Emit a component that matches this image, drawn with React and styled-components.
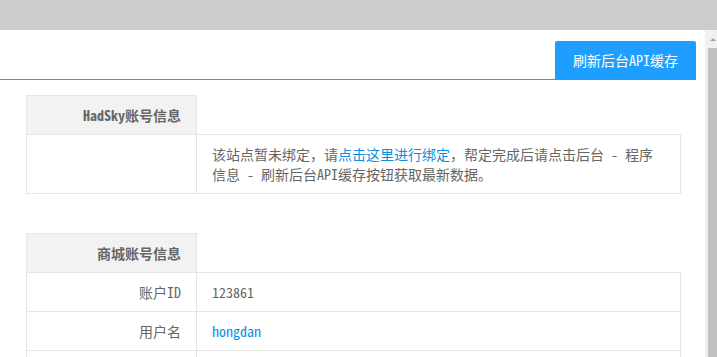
import React from "react";
import styled, { createGlobalStyle } from "styled-components";

const GlobalStyle = createGlobalStyle`
  html, body {
    margin: 0;
    padding: 0;
    overflow: hidden;
  }
  body {
    font-family: "Noto Sans Mono CJK SC", "Noto Sans CJK SC", "Liberation Sans", sans-serif;
    font-size: 14px;
    color: #666;
    background: #fff;
  }
`;

const Page = styled.div`
  height: 357px;
  display: flex;
  flex-direction: column;
`;

const TopBar = styled.div`
  height: 30px;
  flex-shrink: 0;
  background-color: #cccccc;
`;

const Frame = styled.div`
  flex: 1;
  display: flex;
  min-height: 0;
  overflow: hidden;
`;

const Main = styled.div`
  flex: 1;
  background-color: #fff;
`;

const Header = styled.div`
  height: 50px;
  box-sizing: border-box;
  margin-right: 9px;
  display: flex;
  justify-content: flex-end;
  align-items: flex-end;
  border-bottom: 1px solid #1e9fff;
`;

const Button = styled.button`
  height: 38px;
  line-height: 38px;
  padding: 0 18px;
  border: none;
  border-radius: 2px 2px 0 0;
  background-color: #1e9fff;
  color: #fff;
  font-family: inherit;
  font-size: 14px;
  cursor: pointer;
  white-space: nowrap;
`;

const Content = styled.div`
  padding: 15px 24px 0 26px;
`;

const Table = styled.table`
  width: 655px;
  border-collapse: collapse;
  table-layout: fixed;
  margin-bottom: ${(props) => props.gap || 0}px;
`;

const HeadCell = styled.th`
  padding: 9px 15px;
  line-height: 20px;
  text-align: right;
  font-weight: bold;
  color: #666;
  background-color: #f2f2f2;
  border: 1px solid #e6e6e6;
`;

const EmptyHead = styled.th`
  border: none;
  padding: 0;
`;

const Label = styled.td`
  padding: 9px 15px;
  height: 20px;
  line-height: 20px;
  text-align: right;
  border: 1px solid #e6e6e6;
`;

const Value = styled.td`
  padding: 9px 15px;
  line-height: 20px;
  text-align: left;
  border: 1px solid #e6e6e6;
  color: ${(props) => (props.link ? "#0c8ee0" : "#666")};
`;

const Link = styled.a`
  color: #0c8ee0;
  text-decoration: none;
`;

const Scrollbar = styled.div`
  width: 12px;
  flex-shrink: 0;
  display: flex;
  flex-direction: column;
  background-color: #f1f1f1;
  padding-left: 3px;
  box-sizing: border-box;
`;

const ScrollArrow = styled.div`
  height: 18px;
  flex-shrink: 0;
  display: flex;
  justify-content: center;
  align-items: center;
  &::before {
    content: "";
    width: 0;
    height: 0;
    border-left: 3px solid transparent;
    border-right: 3px solid transparent;
    border-bottom: 3px solid #a3a3a3;
  }
`;

const ScrollThumb = styled.div`
  flex: 1;
  background-color: #c1c1c1;
`;

const InfoTable = ({ title, gap, children }) => (
  <Table gap={gap}>
    <colgroup>
      <col style={{ width: 170 }} />
      <col />
    </colgroup>
    <thead>
      <tr>
        <HeadCell>{title}</HeadCell>
        <EmptyHead />
      </tr>
    </thead>
    <tbody>{children}</tbody>
  </Table>
);

const App = () => {
  return (
    <>
      <GlobalStyle />
      <Page>
        <TopBar />
        <Frame>
          <Main>
            <Header>
              <Button>刷新后台API缓存</Button>
            </Header>
            <Content>
              <InfoTable title="HadSky账号信息" gap={39}>
                <tr>
                  <Label />
                  <Value>
                    该站点暂未绑定，请<Link href="#">点击这里进行绑定</Link>
                    ，帮定完成后请点击后台 - 程序信息 - 刷新后台API缓存按钮获取最新数据。
                  </Value>
                </tr>
              </InfoTable>
              <InfoTable title="商城账号信息">
                <tr>
                  <Label>账户ID</Label>
                  <Value>123861</Value>
                </tr>
                <tr>
                  <Label>用户名</Label>
                  <Value link>hongdan</Value>
                </tr>
                <tr>
                  <Label />
                  <Value />
                </tr>
              </InfoTable>
            </Content>
          </Main>
          <Scrollbar>
            <ScrollArrow />
            <ScrollThumb />
          </Scrollbar>
        </Frame>
      </Page>
    </>
  );
};

export default App;
